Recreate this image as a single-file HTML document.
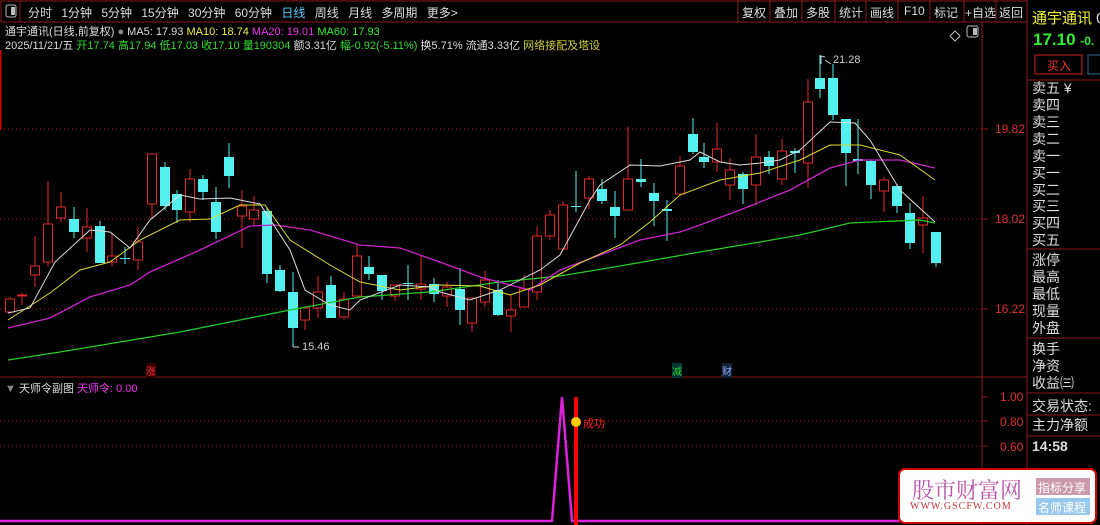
<!DOCTYPE html>
<html><head><meta charset="utf-8"><style>
*{margin:0;padding:0;box-sizing:border-box}
body{width:1100px;height:525px;background:#000;overflow:hidden;position:relative;font-family:"Liberation Sans","Noto Sans CJK SC",sans-serif;font-size:12px;color:#ccc}
.a{position:absolute;white-space:nowrap}
.rp div{position:absolute;left:1032px;font-size:14px;color:#ddd;line-height:16px}
.tb{position:absolute;top:4px;color:#ddd;font-size:12px;white-space:nowrap}
</style></head><body>
<svg class="a" style="left:0;top:0" width="1100" height="525">
<rect x="1" y="1" width="1026" height="21" fill="none" stroke="#8b1a1a"/>
<line x1="20" y1="1" x2="20" y2="22" stroke="#8b1a1a"/>
<rect x="6" y="5" width="10" height="12" fill="none" stroke="#bbb" rx="2"/><rect x="11" y="7" width="4" height="8" fill="#bbb"/>
<g stroke="#8b1a1a"><line x1="738" y1="0" x2="738" y2="22"/><line x1="770" y1="0" x2="770" y2="22"/><line x1="802" y1="0" x2="802" y2="22"/><line x1="835" y1="0" x2="835" y2="22"/><line x1="866" y1="0" x2="866" y2="22"/><line x1="898" y1="0" x2="898" y2="22"/><line x1="930" y1="0" x2="930" y2="22"/><line x1="964" y1="0" x2="964" y2="22"/><line x1="996" y1="0" x2="996" y2="22"/></g>
<line x1="0" y1="50" x2="0" y2="130" stroke="#c00" stroke-width="3"/>
<line x1="982" y1="22" x2="982" y2="525" stroke="#8b1a1a"/>
<line x1="1027" y1="0" x2="1027" y2="525" stroke="#8b1a1a"/>
<line x1="0" y1="377" x2="1027" y2="377" stroke="#8b1a1a"/>
<g stroke="#8b1a1a"><line x1="1027" y1="80" x2="1100" y2="80"/><line x1="1027" y1="249" x2="1100" y2="249"/><line x1="1027" y1="338" x2="1100" y2="338"/><line x1="1027" y1="393" x2="1100" y2="393"/><line x1="1027" y1="415" x2="1100" y2="415"/><line x1="1027" y1="436" x2="1100" y2="436"/></g>
<rect x="1035" y="55" width="47" height="19" fill="none" stroke="#c22"/>
<rect x="1088" y="55" width="20" height="19" fill="none" stroke="#369"/>
<g stroke="#a01818" stroke-dasharray="1,3"><line x1="0" y1="129" x2="982" y2="129"/><line x1="0" y1="219" x2="982" y2="219"/><line x1="0" y1="309" x2="982" y2="309"/><line x1="0" y1="421" x2="982" y2="421"/><line x1="0" y1="446" x2="982" y2="446"/></g>
<g stroke="#8b1a1a"><line x1="982" y1="129" x2="988" y2="129"/><line x1="982" y1="219" x2="988" y2="219"/><line x1="982" y1="309" x2="988" y2="309"/><line x1="982" y1="397" x2="988" y2="397"/><line x1="982" y1="421" x2="988" y2="421"/><line x1="982" y1="446" x2="988" y2="446"/></g>
<path d="M955 31l5 5-5 5-5-5z" fill="none" stroke="#bbb"/><rect x="967" y="26" width="11" height="11" fill="none" stroke="#bbb" rx="2"/><rect x="973" y="28" width="4" height="7" fill="#bbb"/>
<g id="c"></g>
<polyline fill="none" stroke="#2c2" stroke-width="1.3" points="8,360 60,352 120,342 180,332 240,320 290,310 360,297 430,292 500,282 560,276 620,266 700,252 760,242 800,235 850,223 920,220 935,223"/>
<polyline fill="none" stroke="#c2c" stroke-width="1.3" points="8,328 50,318 90,297 130,285 150,272 200,250 250,226 275,225 310,230 360,245 400,248 440,262 480,277 510,285 530,290 560,270 600,255 640,240 680,232 700,225 740,210 790,190 830,168 860,160 900,160 935,168"/>
<polyline fill="none" stroke="#dd3" stroke-width="1" points="8,320 50,293 80,270 110,262 140,240 180,220 210,219 240,205 265,205 290,240 330,265 360,282 400,290 440,285 480,286 510,295 540,285 580,263 620,245 650,222 680,195 720,180 760,173 800,160 830,145 860,145 900,155 935,180"/>
<polyline fill="none" stroke="#ddd" stroke-width="1" points="8,313 30,308 55,262 90,230 110,232 130,248 150,220 180,195 200,199 230,198 260,204 290,250 305,290 330,305 350,310 360,300 400,285 430,287 440,292 470,300 500,290 540,270 560,255 590,200 600,185 630,165 660,166 690,160 700,152 720,162 740,165 760,163 780,160 800,150 830,122 855,123 870,140 900,190 935,222"/>
<path d="M821 64v-8l4 1M825 60l6 4" stroke="#ccc" fill="none"/>
<path d="M293 347h6" stroke="#ccc"/>
<polyline fill="none" stroke="#d2d" stroke-width="2.5" points="0,521 552,521 562,397 572,521 1000,521"/>
<rect x="574" y="397" width="4" height="128" fill="#f00"/>
<circle cx="576" cy="422" r="5" fill="#fc0"/>
<rect x="899" y="469" width="197" height="54" rx="6" fill="#fff" stroke="#c00" stroke-width="2"/>
<rect x="1036" y="478" width="54" height="17" fill="#c9a"/>
<rect x="1036" y="498" width="54" height="17" fill="#99c8ee"/>
</svg>
<div class="a" style="left:28px;top:4px;font-size:12px;color:#ddd;word-spacing:6px">分时 1分钟 5分钟 15分钟 30分钟 60分钟 <span style="color:#5cf">日线</span> 周线 月线 多周期 更多&gt;</div>
<div class="tb" style="left:742px">复权</div><div class="tb" style="left:774px">叠加</div><div class="tb" style="left:806px">多股</div><div class="tb" style="left:839px">统计</div><div class="tb" style="left:870px">画线</div><div class="tb" style="left:904px">F10</div><div class="tb" style="left:934px">标记</div><div class="tb" style="left:965px">+自选</div><div class="tb" style="left:999px">返回</div>
<div class="a" style="left:5px;top:23px;font-size:11px;color:#ddd">通宇通讯(日线,前复权) <span style="color:#888">●</span> MA5: 17.93 <span style="color:#ee4">MA10: 18.74</span> <span style="color:#e3e">MA20: 19.01</span> <span style="color:#3e3">MA60: 17.93</span></div>
<div class="a" style="left:5px;top:37px;font-size:11px;color:#ddd">2025/11/21/五 <span style="color:#3d3">开17.74 高17.94 低17.03 收17.10 量190304</span> 额3.31亿 <span style="color:#3d3">幅-0.92(-5.11%)</span> 换5.71% 流通3.33亿 <span style="color:#cc3">网络接配及塔设</span></div>
<div class="a" style="left:833px;top:54px;font-size:11px;color:#ccc">21.28</div>
<div class="a" style="left:302px;top:341px;font-size:11px;color:#ccc">15.46</div>
<div class="a" style="left:995px;top:122px;color:#d33;font-size:12px">19.82</div>
<div class="a" style="left:995px;top:212px;color:#d33;font-size:12px">18.02</div>
<div class="a" style="left:995px;top:302px;color:#d33;font-size:12px">16.22</div>
<div class="a" style="left:1000px;top:390px;color:#d33;font-size:12px">1.00</div>
<div class="a" style="left:1000px;top:415px;color:#d33;font-size:12px">0.80</div>
<div class="a" style="left:1000px;top:440px;color:#d33;font-size:12px">0.60</div>
<div class="a" style="left:146px;top:363px;font-size:10px;color:#f33;background:#300">涨</div>
<div class="a" style="left:672px;top:363px;font-size:10px;color:#3c3;background:#033">减</div>
<div class="a" style="left:722px;top:363px;font-size:10px;color:#8af;background:#123">财</div>
<div class="a" style="left:5px;top:380px;font-size:11px;color:#ddd"><span style="color:#888">▼</span> 天师令副图 <span style="color:#e3e">天师令: 0.00</span></div>
<div class="a" style="left:583px;top:415px;font-size:11px;color:#f22">成功</div>
<div class="a" style="left:1032px;top:7px;font-size:15px;color:#ee3">通宇通讯 <span style="color:#ddd">0</span></div>
<div class="a" style="left:1033px;top:30px;font-size:17px;font-weight:bold;color:#3e3">17.10 <span style="font-size:12px">-0.</span></div>
<div class="a" style="left:1047px;top:57px;font-size:12px;color:#e33">买入</div>
<div class="rp">
<div style="top:80px">卖五 ¥</div><div style="top:97px">卖四</div><div style="top:114px">卖三</div><div style="top:131px">卖二</div><div style="top:148px">卖一</div><div style="top:165px">买一</div><div style="top:182px">买二</div><div style="top:198px">买三</div><div style="top:215px">买四</div><div style="top:232px">买五</div>
<div style="top:252px">涨停</div><div style="top:269px">最高</div><div style="top:286px">最低</div><div style="top:303px">现量</div><div style="top:320px">外盘</div>
<div style="top:341px">换手</div><div style="top:358px">净资</div><div style="top:375px">收益㈢</div>
<div style="top:398px">交易状态:</div><div style="top:417px">主力净额</div><div style="top:438px;font-weight:bold">14:58</div>
</div>
<div class="a" style="left:912px;top:474px;font-size:22px;color:#b5a;font-family:'Noto Serif CJK SC',serif">股市财富网</div>
<div class="a" style="left:910px;top:501px;font-size:10px;color:#c33;font-family:'Liberation Serif',serif;letter-spacing:1px">WWW.GSCFW.COM</div>
<div class="a" style="left:1038px;top:479px;font-size:12px;color:#fff">指标分享</div>
<div class="a" style="left:1038px;top:499px;font-size:12px;color:#fff">名师课程</div>
<script>
var d=[[10,'r',299,312,297,313],[22,'r',295,295,293,305],[35,'r',266,275,236,287],[48,'r',224,262,181,266],[61,'r',207,218,192,222],[74,'c',219,232,207,238],[87,'r',227,238,208,252],[100,'c',226,263,221,263],[112,'r',256,262,233,266],[125,'c',258,258,247,264],[138,'r',242,260,227,270],[152,'r',154,204,154,218],[165,'c',167,206,162,210],[177,'c',194,210,190,223],[190,'r',179,212,169,222],[203,'c',179,192,175,200],[216,'c',202,232,187,239],[229,'c',157,176,143,188],[242,'r',206,216,190,248],[254,'r',210,219,196,225],[267,'c',211,274,208,283],[280,'c',270,291,265,292],[293,'c',292,328,272,347],[305,'r',308,320,308,330],[318,'r',292,308,276,318],[331,'c',285,318,276,318],[344,'r',299,317,292,320],[357,'r',256,296,244,296],[369,'c',267,274,256,280],[382,'c',275,291,275,300],[395,'r',285,296,285,301],[408,'c',283,283,265,300],[421,'r',284,289,255,300],[434,'c',284,294,278,302],[447,'r',287,296,282,307],[460,'c',289,310,268,325],[472,'r',298,323,298,332],[485,'r',280,302,271,307],[498,'c',290,315,280,316],[511,'r',310,316,294,332],[524,'r',289,307,275,307],[537,'r',236,292,226,300],[550,'r',215,236,210,240],[563,'r',205,249,201,249],[576,'c',206,206,171,212],[589,'r',179,198,176,209],[602,'c',189,201,179,204],[615,'c',207,216,191,238],[628,'r',179,210,127,210],[641,'c',179,182,159,187],[654,'c',193,201,183,226],[667,'c',209,211,200,241],[680,'r',166,194,156,194],[693,'c',134,152,118,154],[704,'c',157,162,143,168],[717,'r',149,162,123,172],[730,'r',170,185,158,200],[743,'c',174,189,172,204],[756,'r',157,185,134,205],[769,'c',157,166,151,174],[782,'r',151,179,139,185],[795,'c',151,153,148,173],[808,'r',102,163,79,188],[820,'c',78,89,55,98],[833,'c',78,115,64,120],[846,'c',119,153,119,186],[858,'c',159,161,119,174],[871,'c',161,185,160,199],[884,'r',180,191,177,212],[897,'c',186,206,184,213],[910,'c',213,243,203,249],[923,'r',218,225,196,253],[936,'c',232,263,232,267]];
var s='';d.forEach(function(k){var x=k[0],col=k[1]=='r'?'#e02828':'#55f0f0',t=k[2],b=k[3],h=Math.max(b-t,1);
s+='<line x1="'+x+'" y1="'+k[4]+'" x2="'+x+'" y2="'+k[5]+'" stroke="'+col+'"/>';
if(k[1]=='r')s+='<rect x="'+(x-4.5)+'" y="'+t+'" width="9" height="'+h+'" fill="#000" stroke="'+col+'"/>';
else s+='<rect x="'+(x-5)+'" y="'+t+'" width="10" height="'+h+'" fill="'+col+'"/>';});
document.getElementById('c').innerHTML=s;
</script>
</body></html>
